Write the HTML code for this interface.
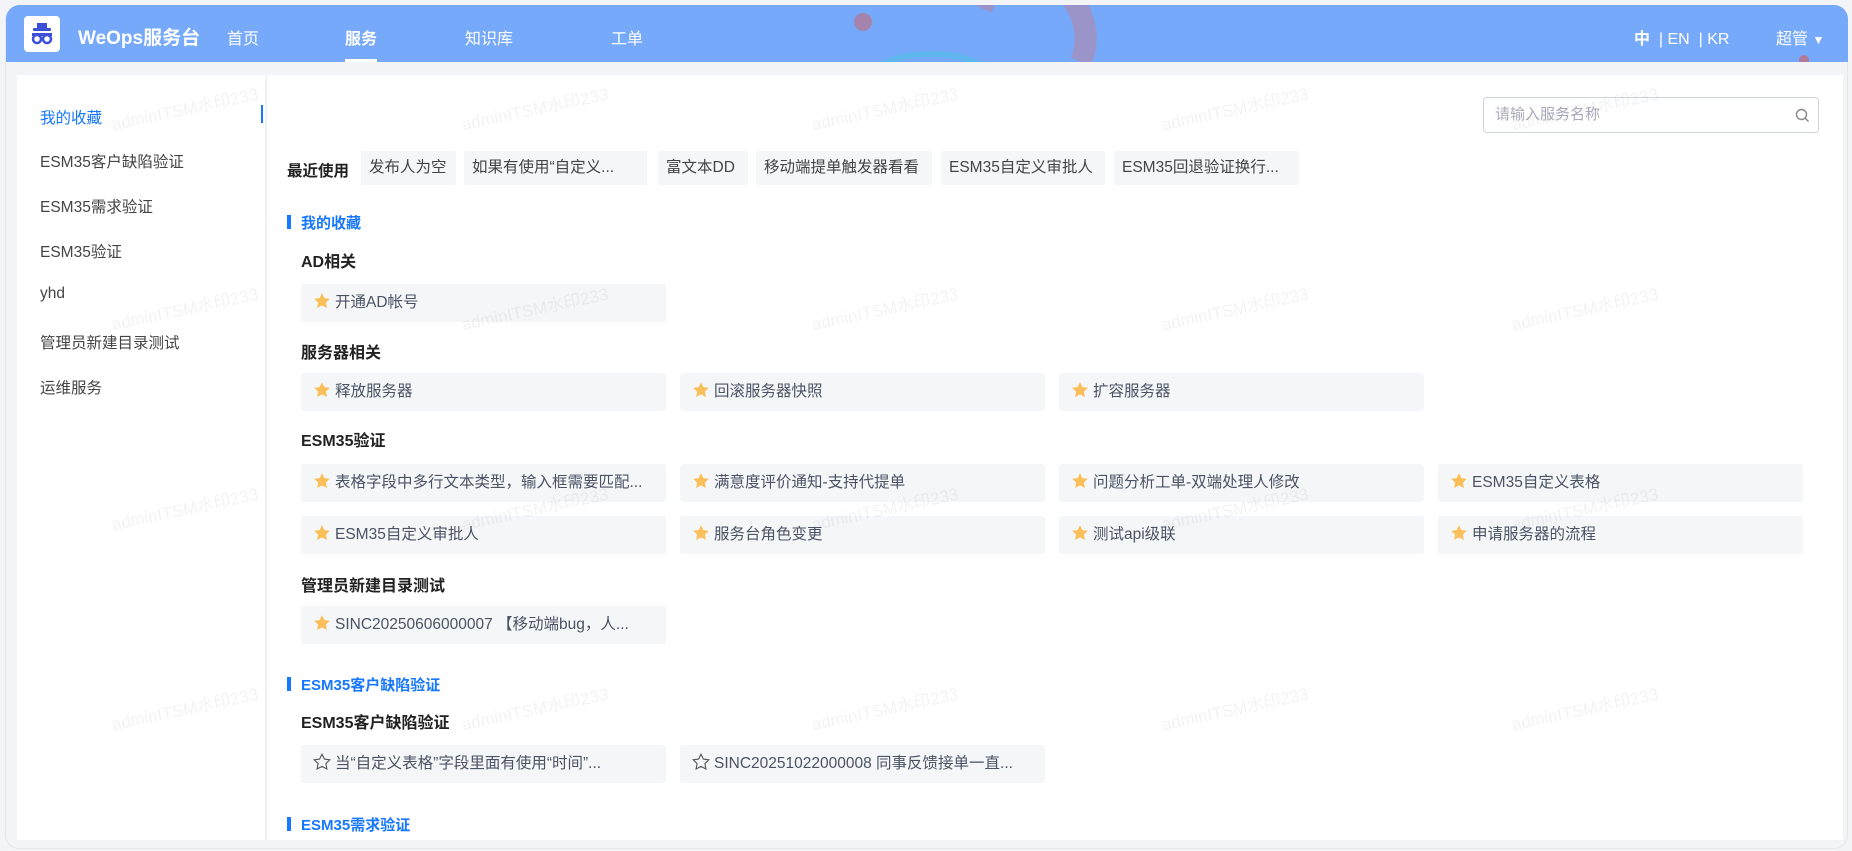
<!DOCTYPE html>
<html><head><meta charset="utf-8">
<style>
*{margin:0;padding:0;box-sizing:border-box}
body{width:1852px;height:851px;background:#f3f4f7;font-family:"Liberation Sans","Noto Sans CJK SC",sans-serif;position:relative;overflow:hidden;color:#333}
.frame{position:absolute;left:5px;top:5px;width:1843px;height:844px;background:#f3f4f7;border-radius:14px;border:1px solid #e6e7ea}
.hdr{position:absolute;left:6px;top:5px;width:1842px;height:57px;border-radius:14px 14px 0 0;background:#76a9f9;overflow:hidden}
.a{position:absolute}
.w{color:#fff;font-size:16px}
.side{position:absolute;left:17px;top:75px;width:248px;height:765px;background:#fff}
.main{position:absolute;left:266px;top:75px;width:1577px;height:765px;background:#fff;border-left:1px solid #eceef2}
.si{position:absolute;left:40px;font-size:15.5px;color:#444}
.chip{position:absolute;top:151px;height:34px;background:#f5f6f8;font-size:15.5px;color:#444;line-height:34px;padding:0 8px;border-radius:2px;white-space:nowrap}
.sec{position:absolute;left:287px;font-size:15px;font-weight:bold;color:#1677ff}
.sec:before{content:"";position:absolute;left:0;top:3px;width:4px;height:14px;background:#1677ff}
.sec span{margin-left:14px}
.sub{position:absolute;left:301px;font-size:16px;font-weight:bold;color:#222}
.card{position:absolute;width:365px;height:38px;background:#f5f6f8;border-radius:3px;font-size:15.5px;color:#4a5363;line-height:38px;padding-left:12px;white-space:nowrap}
.card svg{vertical-align:-3px;margin-right:4px}
.wm{position:absolute;color:rgba(0,0,0,0.05);font-size:17px;transform:rotate(-12deg);white-space:nowrap}
</style></head><body>
<div class="frame"></div>
<div class="hdr">
  <div class="a" style="left:848px;top:8px;width:18px;height:18px;border-radius:50%;background:#b07a9a;opacity:.8"></div>
  <div class="a" style="left:960px;top:-40px;width:130px;height:140px;border-radius:50%;border:22px solid #c0809a;border-left-color:transparent;border-bottom-color:transparent;opacity:.5;transform:rotate(-20deg)"></div>
  <div class="a" style="left:860px;top:46px;width:130px;height:60px;border-radius:50%;border:6px solid #5fb7ee"></div>
  <div class="a" style="left:1793px;top:50px;width:10px;height:10px;border-radius:50%;background:#b07a9a"></div>
</div>
<div class="a" style="left:24px;top:16px;width:36px;height:36px;background:#fff;border-radius:4px"></div>
<svg class="a" style="left:28px;top:20px" width="28" height="28" viewBox="0 0 28 28"><rect x="9" y="3" width="10" height="6" fill="#3d4fd8"/><rect x="5" y="8" width="18" height="3" rx="1" fill="#3d4fd8"/><path d="M4 13h20v3H4z" fill="#3d4fd8"/><circle cx="9" cy="19" r="4" fill="none" stroke="#3d4fd8" stroke-width="2.5"/><circle cx="19" cy="19" r="4" fill="none" stroke="#3d4fd8" stroke-width="2.5"/></svg>
<div class="a w" style="left:78px;top:23px;font-size:19px;font-weight:bold">WeOps服务台</div>
<div class="a w" style="left:227px;top:25px">首页</div>
<div class="a w" style="left:345px;top:25px;font-weight:bold">服务</div>
<div class="a" style="left:345px;top:59px;width:32px;height:3px;background:#fff"></div>
<div class="a w" style="left:465px;top:25px">知识库</div>
<div class="a w" style="left:611px;top:25px">工单</div>
<div class="a w" style="left:1634px;top:25px;font-size:16px"><b>中</b> &nbsp;| EN &nbsp;| KR</div>
<div class="a w" style="left:1776px;top:25px">超管 <span style="font-size:12px">▼</span></div>

<div class="side"></div>
<div class="main"></div>
<div class="a" style="left:261px;top:105px;width:2px;height:18px;background:#1677ff"></div>
<div class="si" style="top:106px;color:#1677ff">我的收藏</div>
<div class="si" style="top:150px">ESM35客户缺陷验证</div>
<div class="si" style="top:195px">ESM35需求验证</div>
<div class="si" style="top:240px">ESM35验证</div>
<div class="si" style="top:285px">yhd</div>
<div class="si" style="top:331px">管理员新建目录测试</div>
<div class="si" style="top:376px">运维服务</div>

<div class="a" style="left:1483px;top:97px;width:336px;height:36px;border:1px solid #cfd4dc;border-radius:4px;font-size:15px;color:#aab;line-height:34px;padding-left:11px">请输入服务名称
<svg style="position:absolute;right:8px;top:10px" width="15" height="15" viewBox="0 0 15 15"><circle cx="6.5" cy="6.5" r="5" fill="none" stroke="#888" stroke-width="1.4"/><path d="M10 10l3.5 3.5" stroke="#888" stroke-width="1.4"/></svg></div>

<div class="a" style="left:287px;top:159px;font-size:15.5px;font-weight:bold;color:#222">最近使用</div>
<div class="chip" style="left:361px;width:95px">发布人为空</div>
<div class="chip" style="left:464px;width:183px">如果有使用“自定义...</div>
<div class="chip" style="left:658px;width:90px">富文本DD</div>
<div class="chip" style="left:756px;width:176px">移动端提单触发器看看</div>
<div class="chip" style="left:941px;width:164px">ESM35自定义审批人</div>
<div class="chip" style="left:1114px;width:185px">ESM35回退验证换行...</div>

<div class="sec" style="top:212px"><span>我的收藏</span></div>
<div class="sub" style="top:248px">AD相关</div>
<div class="sub" style="top:339px">服务器相关</div>
<div class="sub" style="top:427px">ESM35验证</div>
<div class="sub" style="top:572px">管理员新建目录测试</div>
<div class="sec" style="top:674px"><span>ESM35客户缺陷验证</span></div>
<div class="sub" style="top:709px">ESM35客户缺陷验证</div>
<div class="sec" style="top:814px"><span>ESM35需求验证</span></div>

<svg width="0" height="0" style="position:absolute"><defs><path id="st" d="M9 1.2l2.4 4.9 5.4.7-3.9 3.8 1 5.4L9 13.4 4.1 16l1-5.4L1.2 6.8l5.4-.7z"/></defs></svg>
<div class="card" style="left:301px;top:284px"><svg width="18" height="18"><use href="#st" fill="#fbbf5a"/></svg>开通AD帐号</div>
<div class="card" style="left:301px;top:373px"><svg width="18" height="18"><use href="#st" fill="#fbbf5a"/></svg>释放服务器</div>
<div class="card" style="left:680px;top:373px"><svg width="18" height="18"><use href="#st" fill="#fbbf5a"/></svg>回滚服务器快照</div>
<div class="card" style="left:1059px;top:373px"><svg width="18" height="18"><use href="#st" fill="#fbbf5a"/></svg>扩容服务器</div>
<div class="card" style="left:301px;top:464px"><svg width="18" height="18"><use href="#st" fill="#fbbf5a"/></svg>表格字段中多行文本类型，输入框需要匹配...</div>
<div class="card" style="left:680px;top:464px"><svg width="18" height="18"><use href="#st" fill="#fbbf5a"/></svg>满意度评价通知-支持代提单</div>
<div class="card" style="left:1059px;top:464px"><svg width="18" height="18"><use href="#st" fill="#fbbf5a"/></svg>问题分析工单-双端处理人修改</div>
<div class="card" style="left:1438px;top:464px"><svg width="18" height="18"><use href="#st" fill="#fbbf5a"/></svg>ESM35自定义表格</div>
<div class="card" style="left:301px;top:516px"><svg width="18" height="18"><use href="#st" fill="#fbbf5a"/></svg>ESM35自定义审批人</div>
<div class="card" style="left:680px;top:516px"><svg width="18" height="18"><use href="#st" fill="#fbbf5a"/></svg>服务台角色变更</div>
<div class="card" style="left:1059px;top:516px"><svg width="18" height="18"><use href="#st" fill="#fbbf5a"/></svg>测试api级联</div>
<div class="card" style="left:1438px;top:516px"><svg width="18" height="18"><use href="#st" fill="#fbbf5a"/></svg>申请服务器的流程</div>
<div class="card" style="left:301px;top:606px"><svg width="18" height="18"><use href="#st" fill="#fbbf5a"/></svg>SINC20250606000007 【移动端bug，人...</div>
<div class="card" style="left:301px;top:745px"><svg width="18" height="18"><use href="#st" fill="none" stroke="#555" stroke-width="1.1"/></svg>当“自定义表格”字段里面有使用“时间”...</div>
<div class="card" style="left:680px;top:745px"><svg width="18" height="18"><use href="#st" fill="none" stroke="#555" stroke-width="1.1"/></svg>SINC20251022000008 同事反馈接单一直...</div>

<div class="wm" style="left:110px;top:95px">adminITSM水印233</div>
<div class="wm" style="left:460px;top:95px">adminITSM水印233</div>
<div class="wm" style="left:810px;top:95px">adminITSM水印233</div>
<div class="wm" style="left:1160px;top:95px">adminITSM水印233</div>
<div class="wm" style="left:1510px;top:95px">adminITSM水印233</div>
<div class="wm" style="left:110px;top:295px">adminITSM水印233</div>
<div class="wm" style="left:460px;top:295px">adminITSM水印233</div>
<div class="wm" style="left:810px;top:295px">adminITSM水印233</div>
<div class="wm" style="left:1160px;top:295px">adminITSM水印233</div>
<div class="wm" style="left:1510px;top:295px">adminITSM水印233</div>
<div class="wm" style="left:110px;top:495px">adminITSM水印233</div>
<div class="wm" style="left:460px;top:495px">adminITSM水印233</div>
<div class="wm" style="left:810px;top:495px">adminITSM水印233</div>
<div class="wm" style="left:1160px;top:495px">adminITSM水印233</div>
<div class="wm" style="left:1510px;top:495px">adminITSM水印233</div>
<div class="wm" style="left:110px;top:695px">adminITSM水印233</div>
<div class="wm" style="left:460px;top:695px">adminITSM水印233</div>
<div class="wm" style="left:810px;top:695px">adminITSM水印233</div>
<div class="wm" style="left:1160px;top:695px">adminITSM水印233</div>
<div class="wm" style="left:1510px;top:695px">adminITSM水印233</div>
</body></html>
